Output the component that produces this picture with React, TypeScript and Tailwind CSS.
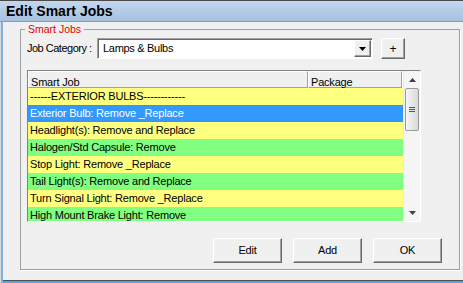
import React from 'react';

const rows = [
  { text: '------EXTERIOR BULBS------------', bg: 'bg-[#ffff80]' },
  { text: 'Exterior Bulb: Remove _Replace', bg: 'bg-[#3399ff]', selected: true },
  { text: 'Headlight(s): Remove and Replace', bg: 'bg-[#ffff80]' },
  { text: 'Halogen/Std Capsule: Remove', bg: 'bg-[#80ff80]' },
  { text: 'Stop Light: Remove _Replace', bg: 'bg-[#ffff80]' },
  { text: 'Tail Light(s): Remove and Replace', bg: 'bg-[#80ff80]' },
  { text: 'Turn Signal Light: Remove _Replace', bg: 'bg-[#ffff80]' },
  { text: 'High Mount Brake Light: Remove', bg: 'bg-[#80ff80]' },
];

const raised =
  'bg-[#f0f0f0] border border-t-white border-l-white border-r-[#696969] border-b-[#696969] shadow-[inset_-1px_-1px_#a0a0a0]';

const Arrow = ({ up }: { up?: boolean }) => (
  <svg width="7" height="4" viewBox="0 0 7 4">
    <polygon points={up ? '3.5,0 7,4 0,4' : '0,0 7,0 3.5,4'} fill="#404040" />
  </svg>
);

const DialogButton = ({ label }: { label: string }) => (
  <button className={`w-[69px] h-[25px] text-[11px] tracking-[-0.2px] ${raised}`}>{label}</button>
);

export default function App() {
  return (
    <div className="w-[463px] h-[283px] overflow-hidden bg-[#f0f0f0] flex flex-col text-black font-['Liberation_Sans',Arial,sans-serif]">
      {/* Title bar */}
      <div className="h-[22px] shrink-0 flex items-center pl-[6px] border-t border-t-[#4a4a4a] border-b border-b-[#8c9cb0] bg-gradient-to-b from-[#c3d7ee] to-[#a6c1e0]">
        <span className="text-[14px] font-bold leading-none">Edit Smart Jobs</span>
      </div>

      {/* Body */}
      <div className="flex-1 pl-[20px] shadow-[inset_1px_0_#d8d8d8,inset_3px_0_#7fb0e0,inset_0_-2px_#5ba3d8,inset_0_-3px_#505050]">
        <fieldset className="mt-[1px] w-[440px] h-[247px] p-0 m-0 border border-[#a0a0a0] shadow-[1px_1px_0_#fff]">
          <legend className="ml-[4px] px-[3px] text-[10.5px] leading-[13px] text-[#e00000]">Smart Jobs</legend>

          {/* Category row */}
          <div className="mt-[2px] pl-[6px] flex items-center h-[21px]">
            <span className="w-[70px] text-[11px] tracking-[-0.5px]">Job Category :</span>
            <div className="w-[276px] h-[21px] flex items-center bg-white border border-t-[#a0a0a0] border-l-[#a0a0a0] border-r-white border-b-white shadow-[inset_1px_1px_#696969]">
              <span className="flex-1 pl-[5px] text-[11px] tracking-[-0.3px]">Lamps &amp; Bulbs</span>
              <div className={`w-[17px] h-[17px] mr-[1px] flex items-center justify-center ${raised}`}>
                <svg width="7" height="4" viewBox="0 0 7 4">
                  <polygon points="0,0 7,0 3.5,4" fill="#000" />
                </svg>
              </div>
            </div>
            <button className={`ml-[8px] w-[24px] h-[21px] text-[12px] leading-none ${raised}`}>+</button>
          </div>

          {/* List */}
          <div className="mt-[11px] ml-[6px] w-[394px] h-[152px] flex bg-white border border-t-[#828282] border-l-[#828282] border-r-white border-b-white">
            <div className="flex-1 overflow-hidden flex flex-col">
              <div className="h-[17px] shrink-0 flex text-[11px] tracking-[-0.2px]">
                <div className="w-[280px] pl-[2px] pt-[2px] bg-[#f0f0f0] border border-t-white border-l-white border-r-[#a0a0a0] border-b-[#a0a0a0]">
                  Smart Job
                </div>
                <div className="w-[94px] pl-[2px] pt-[2px] bg-[#f0f0f0] border border-t-white border-l-white border-r-[#a0a0a0] border-b-[#a0a0a0]">
                  Package
                </div>
              </div>
              {rows.map((row) => (
                <div
                  key={row.text}
                  className={`h-[17px] shrink-0 pl-[2px] text-[11px] leading-[17px] tracking-[-0.2px] whitespace-nowrap ${row.bg} ${
                    row.selected ? 'text-white outline outline-1 outline-dotted -outline-offset-1 outline-[#d2691e]' : ''
                  }`}
                >
                  {row.text}
                </div>
              ))}
            </div>

            {/* Scrollbar */}
            <div className="w-[17px] shrink-0 flex flex-col bg-[#f5f5f5] border-l border-l-[#e8e8e8]">
              <div className="h-[17px] flex items-center justify-center">
                <Arrow up />
              </div>
              <div className="mx-[1px] h-[43px] flex flex-col items-center justify-center gap-[1px] rounded-[2px] border border-[#9a9a9a] bg-gradient-to-r from-[#f6f6f6] to-[#d9d9d9]">
                <div className="w-[6px] h-[1px] bg-[#555]" />
                <div className="w-[6px] h-[1px] bg-[#555]" />
                <div className="w-[6px] h-[1px] bg-[#555]" />
              </div>
              <div className="flex-1" />
              <div className="h-[17px] flex items-center justify-center">
                <Arrow />
              </div>
            </div>
          </div>

          {/* Buttons */}
          <div className="mt-[16px] pr-[17px] flex justify-end gap-[11px]">
            <DialogButton label="Edit" />
            <DialogButton label="Add" />
            <DialogButton label="OK" />
          </div>
        </fieldset>
      </div>
    </div>
  );
}
